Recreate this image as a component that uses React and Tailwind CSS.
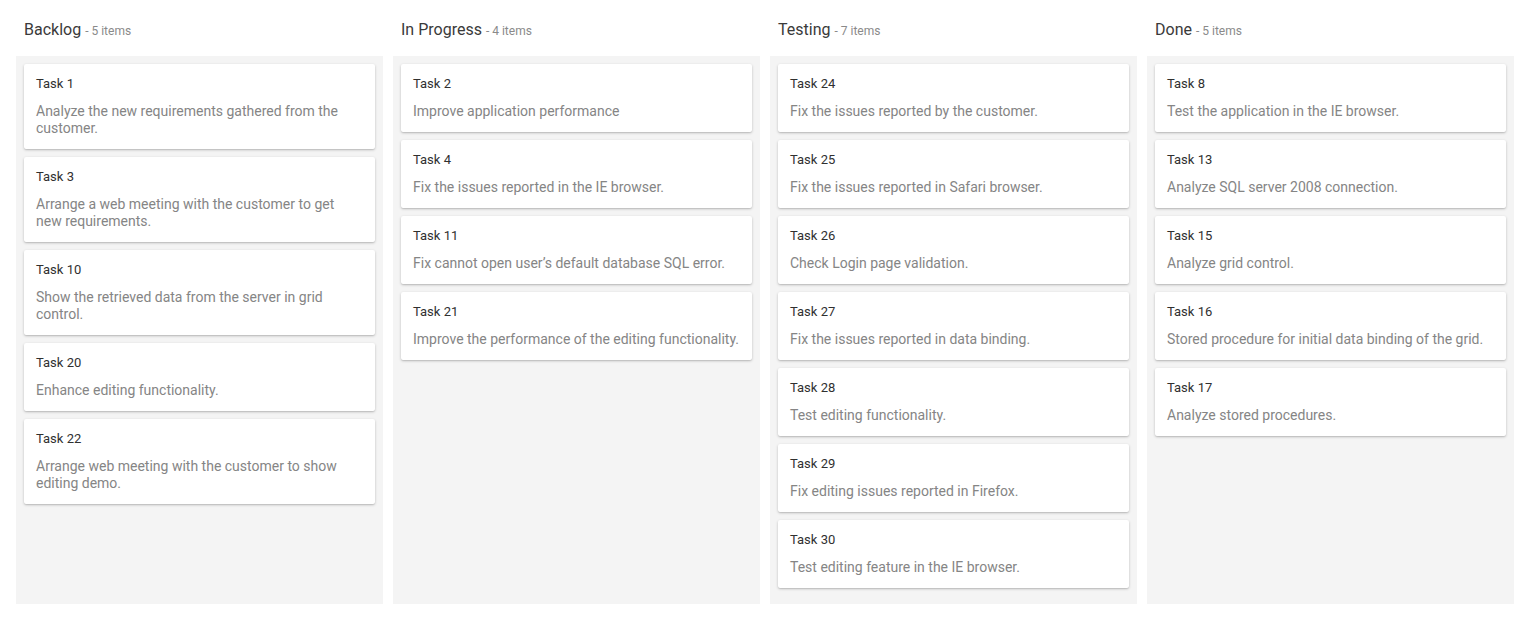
import React from "react";

const columns = [
  {
    title: "Backlog",
    count: "5 items",
    cards: [
      ["Task 1", "Analyze the new requirements gathered from the customer."],
      ["Task 3", "Arrange a web meeting with the customer to get new requirements."],
      ["Task 10", "Show the retrieved data from the server in grid control."],
      ["Task 20", "Enhance editing functionality."],
      ["Task 22", "Arrange web meeting with the customer to show editing demo."],
    ],
  },
  {
    title: "In Progress",
    count: "4 items",
    cards: [
      ["Task 2", "Improve application performance"],
      ["Task 4", "Fix the issues reported in the IE browser."],
      ["Task 11", "Fix cannot open user\u2019s default database SQL error."],
      ["Task 21", "Improve the performance of the editing functionality."],
    ],
  },
  {
    title: "Testing",
    count: "7 items",
    cards: [
      ["Task 24", "Fix the issues reported by the customer."],
      ["Task 25", "Fix the issues reported in Safari browser."],
      ["Task 26", "Check Login page validation."],
      ["Task 27", "Fix the issues reported in data binding."],
      ["Task 28", "Test editing functionality."],
      ["Task 29", "Fix editing issues reported in Firefox."],
      ["Task 30", "Test editing feature in the IE browser."],
    ],
  },
  {
    title: "Done",
    count: "5 items",
    cards: [
      ["Task 8", "Test the application in the IE browser."],
      ["Task 13", "Analyze SQL server 2008 connection."],
      ["Task 15", "Analyze grid control."],
      ["Task 16", "Stored procedure for initial data binding of the grid."],
      ["Task 17", "Analyze stored procedures."],
    ],
  },
];

export default function App() {
  return (
    <div
      className="w-[1534px] h-[619px] bg-white pl-[16px] pr-[20px]"
      style={{ fontFamily: "Roboto, 'Liberation Sans', sans-serif" }}
    >
      <div className="grid grid-cols-4 gap-x-[10px]">
        {columns.map((col) => (
          <div key={col.title} className="h-[56px] pl-[8px] pt-[18px]">
            <span className="text-[16px] leading-[19px] text-[#3a3a3a]">{col.title}</span>
            <span className="text-[12px] leading-[19px] text-[#8a8a8a] ml-[4px]">- {col.count}</span>
          </div>
        ))}
        {columns.map((col) => (
          <div
            key={col.title + "-c"}
            className="h-[548px] bg-[#f4f4f4] px-[8px] pt-[8px] flex flex-col gap-[8px]"
          >
            {col.cards.map(([t, d]) => (
              <div
                key={t}
                className="bg-white rounded-[2px] shadow-[0_1px_3px_rgba(0,0,0,0.2),0_1px_1px_rgba(0,0,0,0.08)] px-[12px] pt-[11px] pb-[12px]"
              >
                <div className="text-[13px] leading-[17px] text-[#303030]">{t}</div>
                <div className="mt-[11px] text-[14px] leading-[17px] text-[#858585]">{d}</div>
              </div>
            ))}
          </div>
        ))}
      </div>
    </div>
  );
}
